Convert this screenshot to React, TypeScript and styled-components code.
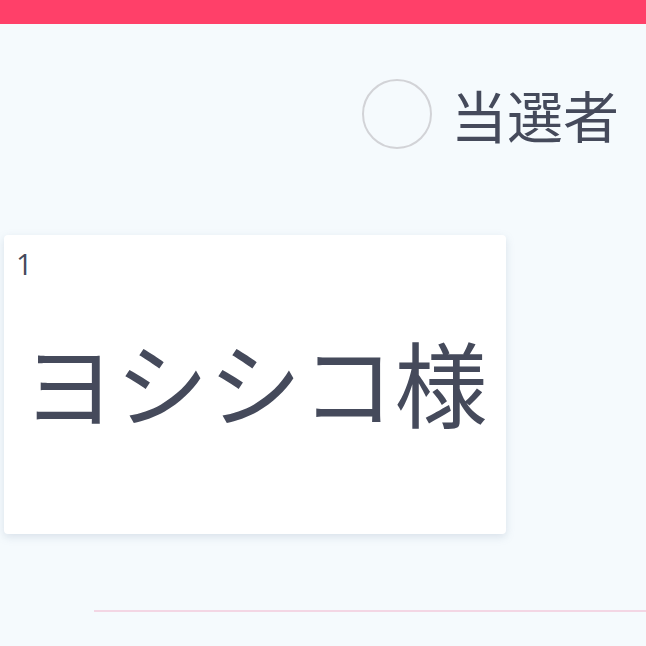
import React from "react";
import styled, { createGlobalStyle } from "styled-components";

const Global = createGlobalStyle`
  html, body { margin: 0; padding: 0; background: #f5fafd; }
  body { font-family: "Noto Sans CJK JP", "Noto Sans", sans-serif; color: #454a5b; }
`;

const Page = styled.div`
  width: 646px;
  height: 646px;
  overflow: hidden;
  background: #f5fafd;
  display: flex;
  flex-direction: column;
`;

const TopBar = styled.div`
  height: 24px;
  background: #ff4069;
  flex-shrink: 0;
`;

const WinnerRow = styled.div`
  display: flex;
  justify-content: flex-end;
  align-items: center;
  gap: 19px;
  padding: 55px 27px 0 0;
`;

const Radio = styled.div`
  width: 66px;
  height: 66px;
  border-radius: 50%;
  border: 2px solid #d2d3d7;
  background: #f5fafd;
`;

const WinnerLabel = styled.span`
  font-size: 56px;
  line-height: 70px;
  font-weight: 400;
  color: #454a5b;
`;

const Card = styled.div`
  margin: 86px 0 0 4px;
  width: 502px;
  height: 299px;
  background: #ffffff;
  border-radius: 4px;
  box-shadow: 0 3px 8px rgba(120, 140, 170, 0.22);
  display: flex;
  flex-direction: column;
  box-sizing: border-box;
  padding: 12px 12px 0 12px;
`;

const CardNo = styled.div`
  font-family: "Open Sans", "Noto Sans", sans-serif;
  font-size: 29px;
  line-height: 34px;
  color: #454a5b;
`;

const Name = styled.div`
  flex: 1;
  display: flex;
  align-items: center;
  justify-content: center;
  font-size: 93px;
  line-height: 1;
  margin-top: -54px;
  color: #454a5b;
  white-space: nowrap;
`;

const Divider = styled.div`
  margin: 76px 0 0 94px;
  height: 2px;
  background: #f3d6e4;
`;

export default function App() {
  return (
    <Page>
      <Global />
      <TopBar />
      <WinnerRow>
        <Radio />
        <WinnerLabel>当選者</WinnerLabel>
      </WinnerRow>
      <Card>
        <CardNo>1</CardNo>
        <Name>ヨシシコ様</Name>
      </Card>
      <Divider />
    </Page>
  );
}
